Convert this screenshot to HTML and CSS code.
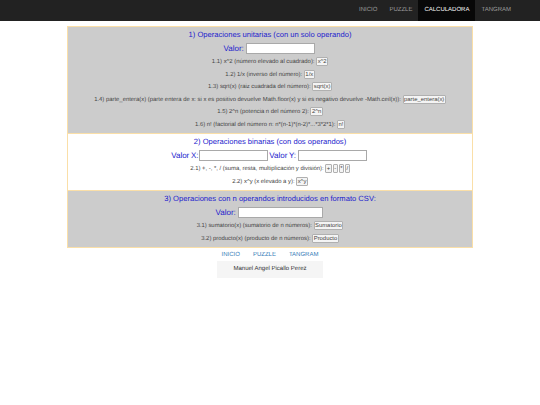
FILE: index.html
```html
<!DOCTYPE html>
<html lang="es">
<head>
    <meta charset="UTF-8">
    <title>Calculadora</title>
    <link rel="stylesheet" href="styles.css">
</head>
<body>
    <nav class="navbar">
        <a href="#">INICIO</a>
        <a href="#">PUZZLE</a>
        <a href="#" class="active">CALCULADORA</a>
        <a href="#">TANGRAM</a>
    </nav>

    <div class="container">
        <section class="panel gray">
            <h2>1) Operaciones unitarias (con un solo operando)</h2>
            <div class="values"><label>Valor:</label> <input type="text" class="wide"></div>
            <p>1.1) x^2 (número elevado al cuadrado): <button>x^2</button></p>
            <p>1.2) 1/x (inverso del número): <button>1/x</button></p>
            <p>1.3) sqrt(x) (raiz cuadrada del número): <button>sqrt(x)</button></p>
            <p>1.4) parte_entera(x) (parte entera de x: si x es positivo devuelve Math.floor(x) y si es negativo devuelve -Math.ceil(x)): <button>parte_entera(x)</button></p>
            <p>1.5) 2^n (potencia n del número 2): <button>2^n</button></p>
            <p>1.6) n! (factorial del número n: n*(n-1)*(n-2)*...*3*2*1): <button>n!</button></p>
        </section>

        <section class="panel">
            <h2>2) Operaciones binarias (con dos operandos)</h2>
            <div class="values"><label>Valor X:</label><input type="text" class="wide"> <label>Valor Y:</label> <input type="text" class="wide"></div>
            <p>2.1) +, -, *, / (suma, resta, multiplicación y división): <button>+</button><button>-</button><button>*</button><button>/</button></p>
            <p>2.2) x^y (x elevado a y): <button>x^y</button></p>
        </section>

        <section class="panel gray">
            <h2>3) Operaciones con n operandos introducidos en formato CSV:</h2>
            <div class="values"><label>Valor:</label> <input type="text" class="wider"></div>
            <p>3.1) sumatorio(x) (sumatorio de n números): <button>Sumatorio</button></p>
            <p>3.2) producto(x) (producto de n números): <button>Producto</button></p>
        </section>
    </div>

    <div class="links">
        <a href="#">INICIO</a>
        <a href="#">PUZZLE</a>
        <a href="#">TANGRAM</a>
    </div>

    <footer class="footer">Manuel Angel Picallo Perez</footer>
</body>
</html>
```

FILE: styles.css
```css
body {
    font-family: "Liberation Sans", Arial, sans-serif;
    margin: 0;
    padding: 0;
    background-color: #ffffff;
    color: #333333;
    text-rendering: geometricPrecision;
}
.navbar {
    display: flex;
    justify-content: flex-end;
    height: 21px;
    padding-right: 23px;
    background-color: #222222;
}
.navbar a {
    padding: 0 6px;
    line-height: 21px;
    font-size: 6px;
    color: #9d9d9d;
    text-decoration: none;
}
.navbar a.active {
    color: #ffffff;
    background-color: #080808;
}
.container {
    width: 406px;
    margin: 5px auto 0;
}
.panel {
    padding: 3px 0 2px;
    border: 1px solid #fadfa8;
    text-align: center;
    background-color: #ffffff;
}
.panel + .panel {
    border-top: 0;
}
.gray {
    background-color: #cccccc;
}
h2 {
    margin: 0;
    font-size: 7.6px;
    font-weight: normal;
    line-height: 10px;
    color: #2222cc;
}
.values {
    height: 16px;
    padding-right: 2px;
    line-height: 17px;
    font-size: 8px;
    word-spacing: -0.5px;
    color: #2222cc;
}
input {
    box-sizing: border-box;
    height: 11px;
    padding: 0;
    border: 1px solid #a9a9a9;
    background-color: #ffffff;
    vertical-align: middle;
}
.wide {
    width: 69px;
}
.wider {
    width: 85px;
}
p {
    margin: 0;
    font-size: 5.9px;
    line-height: 12.5px;
    color: #444444;
}
button {
    padding: 0 0.5px;
    font-family: inherit;
    font-size: 5.9px;
    line-height: 7px;
    color: #444444;
    background-color: #f4f4f4;
    border: 1px solid #b0b0b0;
    border-radius: 1px;
}
button + button {
    margin-left: 1px;
}
.links {
    display: flex;
    justify-content: center;
    gap: 13px;
    padding-top: 2px;
    line-height: 11px;
    font-size: 6px;
}
.links a {
    color: #337ab7;
    text-decoration: none;
}
.footer {
    width: 106px;
    margin: 0 auto;
    line-height: 17px;
    font-size: 6px;
    text-align: center;
    background-color: #f5f5f5;
}
```
